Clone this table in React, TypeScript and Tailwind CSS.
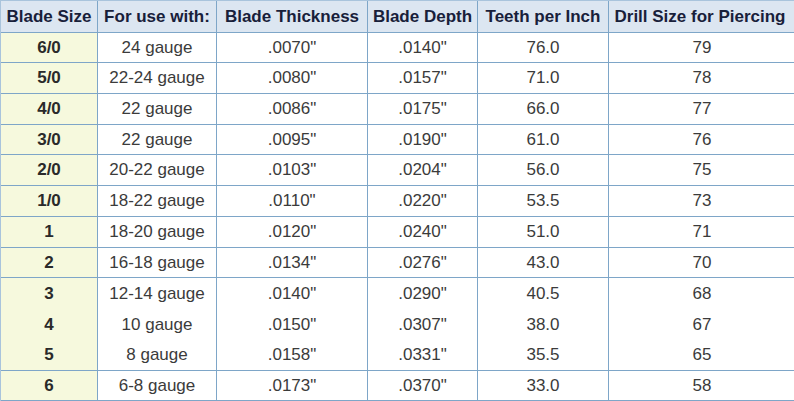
type Row = {
  size: string;
  use: string;
  thick: string;
  depth: string;
  tpi: string;
  drill: string;
  h: string;
  line?: boolean;
};

const rows: Row[] = [
  { size: "6/0", use: "24 gauge", thick: ".0070\"", depth: ".0140\"", tpi: "76.0", drill: "79", h: "h-[30px]" },
  { size: "5/0", use: "22-24 gauge", thick: ".0080\"", depth: ".0157\"", tpi: "71.0", drill: "78", h: "h-[31px]" },
  { size: "4/0", use: "22 gauge", thick: ".0086\"", depth: ".0175\"", tpi: "66.0", drill: "77", h: "h-[31px]" },
  { size: "3/0", use: "22 gauge", thick: ".0095\"", depth: ".0190\"", tpi: "61.0", drill: "76", h: "h-[30px]" },
  { size: "2/0", use: "20-22 gauge", thick: ".0103\"", depth: ".0204\"", tpi: "56.0", drill: "75", h: "h-[31px]" },
  { size: "1/0", use: "18-22 gauge", thick: ".0110\"", depth: ".0220\"", tpi: "53.5", drill: "73", h: "h-[31px]" },
  { size: "1", use: "18-20 gauge", thick: ".0120\"", depth: ".0240\"", tpi: "51.0", drill: "71", h: "h-[31px]" },
  { size: "2", use: "16-18 gauge", thick: ".0134\"", depth: ".0276\"", tpi: "43.0", drill: "70", h: "h-[30px]" },
  { size: "3", use: "12-14 gauge", thick: ".0140\"", depth: ".0290\"", tpi: "40.5", drill: "68", h: "h-[31px]", line: false },
  { size: "4", use: "10 gauge", thick: ".0150\"", depth: ".0307\"", tpi: "38.0", drill: "67", h: "h-[31px]", line: false },
  { size: "5", use: "8 gauge", thick: ".0158\"", depth: ".0331\"", tpi: "35.5", drill: "65", h: "h-[31px]" },
  { size: "6", use: "6-8 gauge", thick: ".0173\"", depth: ".0370\"", tpi: "33.0", drill: "58", h: "h-[30px]" },
];

const cols = "grid grid-cols-[97px_119px_151px_110px_131px_187px]";
const cell = "flex items-center justify-center whitespace-nowrap border-r border-[#7ea6c8]";

export default function App() {
  return (
    <div className="w-[794px] h-[401px] overflow-hidden bg-white font-['Liberation_Sans',Arial,sans-serif] text-[17px]">
      <div className="w-[796px] border-l border-t border-[#a9c4dc]">
        <div className={`${cols} h-[32px] bg-[#dce6f1] font-bold text-[#18203a] border-b border-[#7ea6c8]`}>
          <div className={cell}>Blade Size</div>
          <div className={cell}>For use with:</div>
          <div className={cell}>Blade Thickness</div>
          <div className={cell}>Blade Depth</div>
          <div className={cell}>Teeth per Inch</div>
          <div className={`${cell} pr-1`}>Drill Size for Piercing</div>
        </div>
        {rows.map((r) => (
          <div
            key={r.size}
            className={`${cols} ${r.h} text-[#3b3b3b] ${r.line === false ? "" : "border-b border-[#7ea6c8]"}`}
          >
            <div className={`${cell} bg-[#f6f9dd] font-bold text-[#2a2a2a]`}>{r.size}</div>
            <div className={cell}>{r.use}</div>
            <div className={cell}>{r.thick}</div>
            <div className={cell}>{r.depth}</div>
            <div className={cell}>{r.tpi}</div>
            <div className={cell}>{r.drill}</div>
          </div>
        ))}
      </div>
    </div>
  );
}
